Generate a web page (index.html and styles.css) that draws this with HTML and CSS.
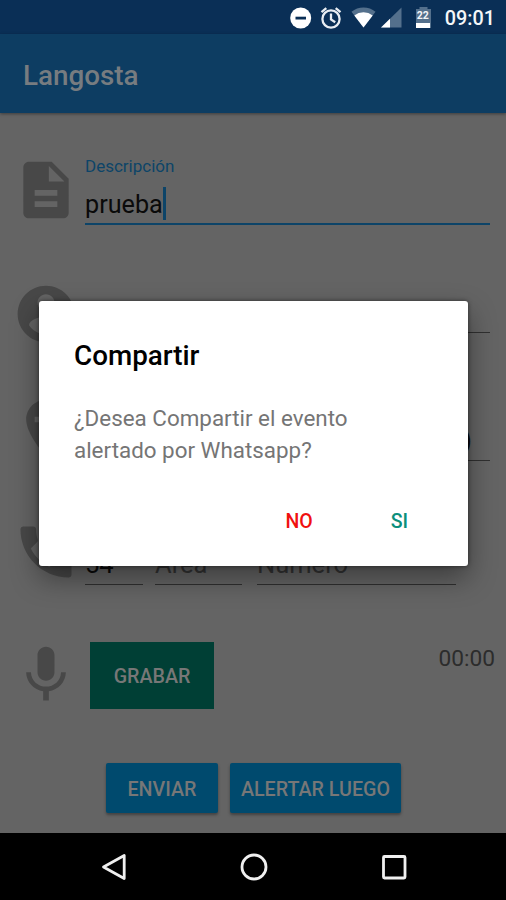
FILE: index.html
```html
<!DOCTYPE html>
<html lang="es">
<head>
  <meta charset="UTF-8">
  <title>Langosta</title>
  <link rel="stylesheet" href="styles.css">
</head>
<body>

  <!-- BARRA DE ESTADO -->
  <div class="status">
    <svg class="status-icons" width="134" height="24" viewBox="0 0 134 24">
      <circle cx="10.7" cy="12" r="10.5" fill="#fff"/>
      <rect x="5.5" y="10.7" width="10.5" height="2.8" fill="#0a2f56"/>
      <g fill="none" stroke="#e8edf2" stroke-width="2.300">
        <circle cx="41" cy="13" r="8.6"/>
        <path d="M41 7.5v6l4.2 2.8M31.5 6.2l4.8-4M50.5 6.2l-4.800-4"/>
      </g>
      <path d="M61.500 5.800a18.500 18.500 0 0 1 24 0L73.500 21.500z" fill="#54708c"/>
      <path d="M64.300 9.500a15 15 0 0 1 18.400 0L73.500 21.500z" fill="#fff"/>
      <path d="M91 21.500L111.500 1.500V21.500z" fill="#54708c"/>
      <path d="M91 21.500L100 12.700V21.500z" fill="#fff"/>
      <path d="M126 3h3.500V1h8v2h3.500v19h-15z" fill="#54708c"/>
    </svg>
    <div class="battery">22</div>
    <span class="clock">09:01</span>
  </div>

  <div class="appbar">Langosta</div>

  <!-- FORMULARIO -->
  <div class="content">
    <div class="row row-desc">
      <svg class="icon" viewBox="0 0 24 24"><path d="M14 2H6c-1.100 0-1.990.9-1.990 2L4 20c0 1.100.89 2 1.990 2H18c1.100 0 2-.9 2-2V8l-6-6zm2 16H8v-2h8v2zm0-4H8v-2h8v2zm-3-5V3.500L18.500 9H13z"/></svg>
      <div class="field active">
        <label>Descripción</label>
        <div class="value">prueba<span class="cursor"></span></div>
      </div>
    </div>

    <div class="row row-user">
      <svg class="icon" viewBox="0 0 24 24"><path d="M12 2C6.480 2 2 6.480 2 12s4.480 10 10 10 10-4.480 10-10S17.520 2 12 2zm0 3c1.660 0 3 1.340 3 3s-1.340 3-3 3-3-1.340-3-3 1.340-3 3-3zm0 14.200c-2.500 0-4.710-1.280-6-3.220.03-1.990 4-3.080 6-3.080 1.990 0 5.970 1.090 6 3.080-1.290 1.940-3.500 3.220-6 3.220z"/></svg>
      <div class="field"></div>
    </div>

    <div class="row row-place">
      <svg class="icon" viewBox="0 0 24 24"><path d="M12 2C8.140 2 5 5.140 5 9c0 5.250 7 13 7 13s7-7.750 7-13c0-3.860-3.140-7-7-7zm4 8h-3v3h-2v-3H8V8h3V5h2v3h3v2z"/></svg>
      <div class="field"><div class="value end">)</div></div>
    </div>

    <div class="row row-phone">
      <svg class="icon" viewBox="0 0 24 24"><path d="M6.620 10.790c1.440 2.830 3.760 5.140 6.590 6.590l2.200-2.200c.27-.27.67-.36 1.020-.24 1.120.37 2.330.57 3.570.57.55 0 1 .45 1 1V20c0 .55-.45 1-1 1-9.390 0-17-7.610-17-17 0-.55.45-1 1-1h3.500c.55 0 1 .45 1 1 0 1.250.2 2.450.57 3.570.11.35.03.74-.25 1.020l-2.200 2.200z"/></svg>
      <div class="field code"><div class="value">54</div></div>
      <div class="field area"><div class="value hint">Área</div></div>
      <div class="field number"><div class="value hint">Número</div></div>
    </div>

    <div class="row row-audio">
      <svg class="icon" viewBox="0 0 24 24"><path d="M12 14c1.660 0 2.990-1.340 2.990-3L15 5c0-1.660-1.340-3-3-3S9 3.340 9 5v6c0 1.660 1.340 3 3 3zm5.300-3c0 3-2.540 5.100-5.300 5.100S6.700 14 6.700 11H5c0 3.410 2.720 6.230 6 6.720V21h2v-3.280c3.280-.48 6-3.300 6-6.720h-1.700z"/></svg>
      <button class="record">GRABAR</button>
      <span class="timer">00:00</span>
    </div>

    <div class="actions">
      <button class="send">ENVIAR</button>
      <button class="later">ALERTAR LUEGO</button>
    </div>
  </div>

  <!-- NAVEGACION -->
  <div class="navbar">
    <svg width="28" height="28" viewBox="0 0 28 28"><path d="M24.200 2.500V25.500L3.500 14z"/></svg>
    <svg width="28" height="28" viewBox="0 0 28 28"><circle cx="14" cy="14" r="12"/></svg>
    <svg width="28" height="28" viewBox="0 0 28 28"><rect x="3.500" y="3.500" width="21.500" height="21.500" rx="1"/></svg>
  </div>

  <!-- DIALOGO -->
  <div class="dialog">
    <h2>Compartir</h2>
    <p>¿Desea Compartir el evento<br>alertado por Whatsapp?</p>
    <div class="dialog-buttons">
      <span class="no">NO</span>
      <span class="si">SI</span>
    </div>
  </div>

</body>
</html>
```

FILE: styles.css
```css
* {
  box-sizing: border-box;
}

body {
  margin: 0;
  width: 506px;
  height: 900px;
  display: flex;
  flex-direction: column;
  position: relative;
  overflow: hidden;
  font-family: Roboto, sans-serif;
  background-color: #646464;
}

.status {
  height: 34px;
  display: flex;
  align-items: center;
  justify-content: flex-end;
  padding: 2px 11px 0 0;
  background-color: #0a2f56;
  color: #f4f6f8;
}

.status-icons {
  overflow: visible;
}

.battery {
  width: 14px;
  height: 20px;
  margin: 0 15px 0 -8px;
  z-index: 1;
  border-bottom: 5px solid #fff;
  font-size: 10.500px;
  font-weight: 700;
  line-height: 16px;
  text-align: center;
}

.clock {
  font-size: 19.800px;
  font-weight: 500;
}

.appbar {
  height: 79px;
  padding: 3px 0 0 23px;
  display: flex;
  align-items: center;
  background-color: #0d3d62;
  color: #777c80;
  font-size: 27.800px;
  font-weight: 500;
  box-shadow: 0 1px 3px rgba(0, 0, 0, 0.4);
}

.content {
  flex: 1;
  padding: 43px 16px 0 11.500px;
}

.row {
  display: flex;
  align-items: flex-start;
  height: 68px;
}

.icon {
  width: 68px;
  height: 68px;
  margin-right: 5.500px;
  flex-shrink: 0;
  fill: #484848;
}

.row-desc { margin-bottom: 56px; }
.row-user { margin-bottom: 46px; }
.row-place { margin-bottom: 56px; }
.row-phone { margin-bottom: 55px; }

.field {
  flex: 1;
  height: 67px;
  display: flex;
  flex-direction: column;
  justify-content: flex-end;
  border-bottom: 1px solid #303030;
}

.row-user .field {
  height: 53px;
}

.field.active {
  height: 69px;
  border-bottom: 2px solid #0d4468;
}

.field label {
  color: #0d4468;
  font-size: 17px;
  line-height: 20px;
}

.value {
  display: flex;
  align-items: center;
  height: 34px;
  margin-bottom: 3px;
  font-size: 25.500px;
  color: #0a0a0a;
}

.active .value {
  height: 36px;
  margin: 10px 0 1px;
  font-size: 25.200px;
}

.cursor {
  width: 3px;
  height: 33px;
  margin-bottom: 2px;
  background-color: #0d4468;
}

.value.end {
  justify-content: flex-end;
  padding-right: 18px;
}

.value.hint {
  color: #333;
}

.field.code { flex: 0 0 58px; }
.field.area { flex: 0 0 87px; margin-left: 12px; }
.field.number { flex: 0 0 199px; margin-left: 15px; }

button {
  border: 0;
  padding: 2px 0 0;
  font-family: Roboto, sans-serif;
  font-size: 19.700px;
  font-weight: 500;
  color: #777;
}

.record {
  width: 124px;
  height: 67px;
  margin: 1px 0 0 5px;
  background-color: #003f35;
}

.timer {
  margin: 5px -5px 0 auto;
  font-size: 22.700px;
  line-height: 26px;
  color: #2c2c2c;
}

.actions {
  display: flex;
  gap: 12px;
  margin: 54px 0 0 94.500px;
}

.actions button {
  height: 50px;
  background-color: #004a6e;
  border-radius: 2px;
  box-shadow: 0 2px 3px rgba(0, 0, 0, 0.35);
}

.send { width: 112px; }
.later { width: 171px; }

.navbar {
  height: 67px;
  padding-left: 1px;
  display: flex;
  justify-content: center;
  align-items: center;
  gap: 112px;
  background-color: #000;
}

.navbar svg {
  fill: none;
  stroke: #f0f0f0;
  stroke-width: 2.800;
  stroke-linejoin: round;
}

.dialog {
  position: absolute;
  left: 39px;
  top: 301px;
  width: 429px;
  height: 265px;
  padding: 39px 35px 0;
  background-color: #fff;
  border-radius: 3px;
  box-shadow: 0 12px 28px rgba(0, 0, 0, 0.4), 0 0 4px rgba(0, 0, 0, 0.5);
}

.dialog h2 {
  margin: 0;
  font-size: 27.800px;
  font-weight: 500;
  line-height: 32px;
  color: #000;
}

.dialog p {
  margin: 30px 0 0;
  font-size: 22.400px;
  line-height: 32px;
  color: #757575;
}

.dialog-buttons {
  display: flex;
  justify-content: flex-end;
  gap: 78px;
  margin-top: 44px;
  padding-right: 25px;
  font-size: 19.500px;
  font-weight: 500;
  line-height: 24px;
}

.no { color: #f01010; }
.si { color: #0c8f7c; }
```
